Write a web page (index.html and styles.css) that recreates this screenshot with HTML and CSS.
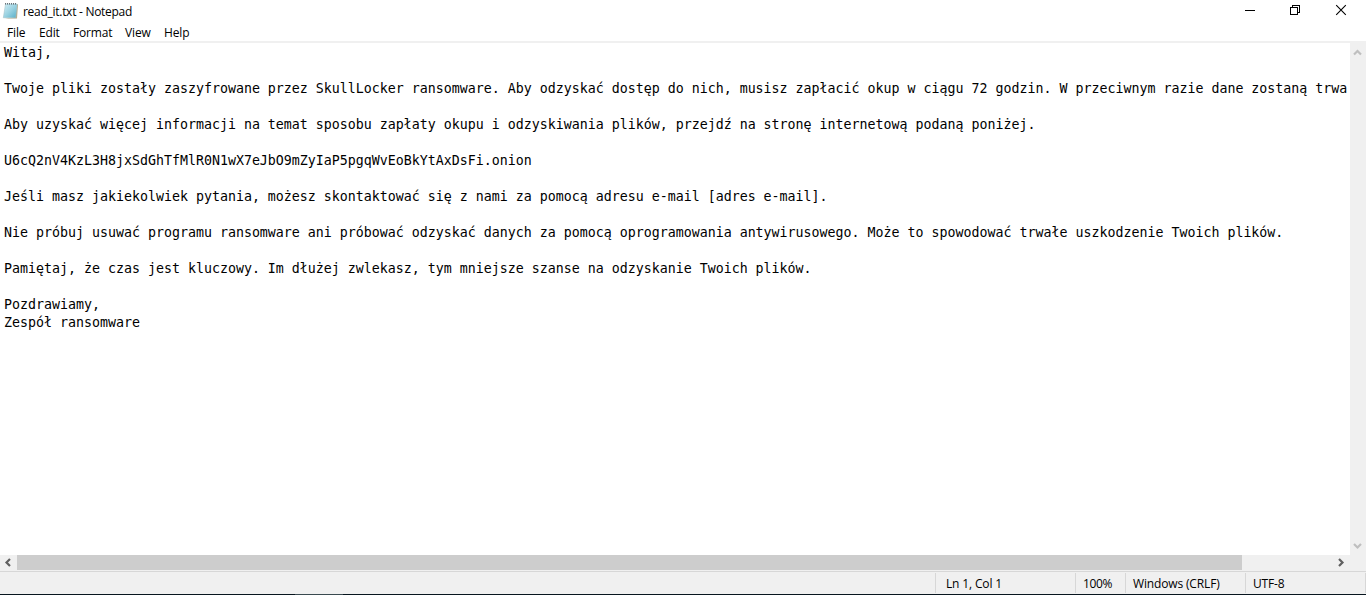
FILE: index.html
```html
<!DOCTYPE html>
<html lang="pl">
<head>
    <meta charset="UTF-8">
    <meta name="viewport" content="width=device-width, initial-scale=1.0">
    <title>read_it.txt - Notepad</title>
    <link rel="stylesheet" href="styles.css">
</head>
<body>
    <div class="window">
        <!-- Title bar -->
        <header class="titlebar">
            <svg class="app-icon" width="18" height="19" viewBox="0 0 18 19">
                <defs>
                    <linearGradient id="page" x1="0" y1="0" x2="1" y2="1">
                        <stop offset="0" stop-color="#d3eef5"/>
                        <stop offset=".5" stop-color="#9bd2e1"/>
                        <stop offset="1" stop-color="#55aec8"/>
                    </linearGradient>
                </defs>
                <path d="M3 17.5h12l1-14-1-.5-2 13z" fill="#b8a888"/>
                <path d="M3.5 3h11.7L13.7 16.8H1.3z" fill="url(#page)" stroke="#9dbcc4" stroke-width=".5"/>
                <path d="M3.5 2v1.6M5.5 2v1.6M7.5 2v1.6M9.5 2v1.6M11.5 2v1.6M13.5 2v1.6" stroke="#6b757b"/>
            </svg>
            <span class="title">read_it.txt - Notepad</span>
            <div class="controls">
                <svg width="46" height="22" viewBox="0 0 46 22" shape-rendering="crispEdges"><path d="M18 10.5h10" stroke="#000"/></svg>
                <svg width="46" height="22" viewBox="0 0 46 22" shape-rendering="crispEdges"><path d="M17.5 7.5h7v7h-7zM19.5 7V5.5h7v7H25" fill="none" stroke="#000"/></svg>
                <svg width="46" height="22" viewBox="0 0 46 22"><path d="M17.2 5.2l9.6 9.6M26.8 5.2l-9.6 9.6" stroke="#000" stroke-width="1.1"/></svg>
            </div>
        </header>

        <!-- Menu -->
        <nav class="menu">
            <span class="menu-file">File</span>
            <span class="menu-edit">Edit</span>
            <span class="menu-format">Format</span>
            <span class="menu-view">View</span>
            <span class="menu-help">Help</span>
        </nav>

        <!-- Text area with scrollbars -->
        <main class="editor">
<pre class="text">Witaj,

Twoje pliki zostały zaszyfrowane przez SkullLocker ransomware. Aby odzyskać dostęp do nich, musisz zapłacić okup w ciągu 72 godzin. W przeciwnym razie dane zostaną trwa

Aby uzyskać więcej informacji na temat sposobu zapłaty okupu i odzyskiwania plików, przejdź na stronę internetową podaną poniżej.

U6cQ2nV4KzL3H8jxSdGhTfMlR0N1wX7eJbO9mZyIaP5pgqWvEoBkYtAxDsFi.onion

Jeśli masz jakiekolwiek pytania, możesz skontaktować się z nami za pomocą adresu e-mail [adres e-mail].

Nie próbuj usuwać programu ransomware ani próbować odzyskać danych za pomocą oprogramowania antywirusowego. Może to spowodować trwałe uszkodzenie Twoich plików.

Pamiętaj, że czas jest kluczowy. Im dłużej zwlekasz, tym mniejsze szanse na odzyskanie Twoich plików.

Pozdrawiamy,
Zespół ransomware</pre>
            <div class="vscroll">
                <svg width="16" height="17" viewBox="0 0 16 17"><path d="M4 11.5L7.5 8l3.5 3.5" fill="none" stroke="#bfbfbf" stroke-width="2.2"/></svg>
                <svg width="16" height="17" viewBox="0 0 16 17"><path d="M4 6l3.5 3.5L11 6" fill="none" stroke="#bfbfbf" stroke-width="2.2"/></svg>
            </div>
        </main>
        <div class="hscroll">
            <svg width="17" height="15" viewBox="0 0 17 15"><path d="M10 4L6.5 7.5 10 11" fill="none" stroke="#606060" stroke-width="2.2"/></svg>
            <div class="thumb"></div>
            <svg class="right-arrow" width="17" height="15" viewBox="0 0 17 15"><path d="M7 4l3.5 3.5L7 11" fill="none" stroke="#606060" stroke-width="2.2"/></svg>
        </div>

        <!-- Status bar -->
        <footer class="status">
            <span class="cell position">Ln 1, Col 1</span>
            <span class="cell zoom">100%</span>
            <span class="cell eol">Windows (CRLF)</span>
            <span class="cell encoding">UTF-8</span>
        </footer>
        <div class="taskbar-edge"><div class="task"></div></div>
    </div>
</body>
</html>
```
FILE: styles.css
```css
body {
    margin: 0;
    font-family: "Open Sans", "Noto Sans", sans-serif;
    font-size: 12px;
    color: #000;
    background-color: #fff;
}
.window {
    display: flex;
    flex-direction: column;
    height: 595px;
    overflow: hidden;
}
svg {
    display: block;
    flex: none;
}
span {
    white-space: nowrap;
}
/* Title bar */
.titlebar {
    display: flex;
    height: 23px;
    flex: none;
}
.app-icon {
    margin: 1px 0 0 2px;
}
.title {
    margin-left: 3px;
    line-height: 24px;
    letter-spacing: -0.28px;
}
.controls {
    display: flex;
    margin-left: auto;
    margin-right: 1px;
}
/* Menu */
.menu {
    display: flex;
    height: 18px;
    flex: none;
    padding-left: 7px;
    line-height: 20px;
    letter-spacing: -0.15px;
    border-bottom: 2px solid #f0f0f0;
}
.menu-file {
    width: 32px;
}
.menu-edit {
    width: 34px;
}
.menu-format {
    width: 52px;
}
.menu-view {
    width: 39px;
}
/* Text area */
.editor {
    display: flex;
    flex: 1;
    min-height: 0;
}
.text {
    box-sizing: border-box;
    width: 1347px;
    flex: none;
    margin: 0 3px 0 0;
    padding: 1px 0 0 4px;
    overflow: hidden;
    font-family: "DejaVu Sans Mono", monospace;
    font-size: 13.29px;
    line-height: 18px;
}
.vscroll {
    display: flex;
    flex-direction: column;
    justify-content: space-between;
    width: 16px;
    background-color: #f0f0f0;
}
.hscroll {
    display: flex;
    height: 15px;
    flex: none;
    padding-bottom: 1px;
    background-color: #f0f0f0;
}
.thumb {
    width: 1225px;
    background-color: #cdcdcd;
}
.right-arrow {
    margin-left: auto;
    margin-right: 17px;
}
/* Status bar */
.status {
    display: flex;
    justify-content: flex-end;
    height: 21px;
    flex: none;
    padding-top: 1px;
    border-top: 1px solid #d7d7d7;
    background-color: #f0f0f0;
    line-height: 22px;
}
.cell {
    box-sizing: border-box;
    height: 20px;
    padding-left: 7px;
    border-left: 1px solid #d7d7d7;
    letter-spacing: -0.15px;
}
.position {
    width: 140px;
    padding-left: 10px;
}
.zoom {
    width: 50px;
    letter-spacing: -0.4px;
}
.eol {
    width: 120px;
}
.encoding {
    width: 121px;
    border-right: 1px solid #d7d7d7;
}
.taskbar-edge {
    height: 1px;
    flex: none;
    background-color: #07151e;
}
.task {
    width: 48px;
    height: 1px;
    margin-left: 295px;
    background-color: #3a4a50;
}
```
